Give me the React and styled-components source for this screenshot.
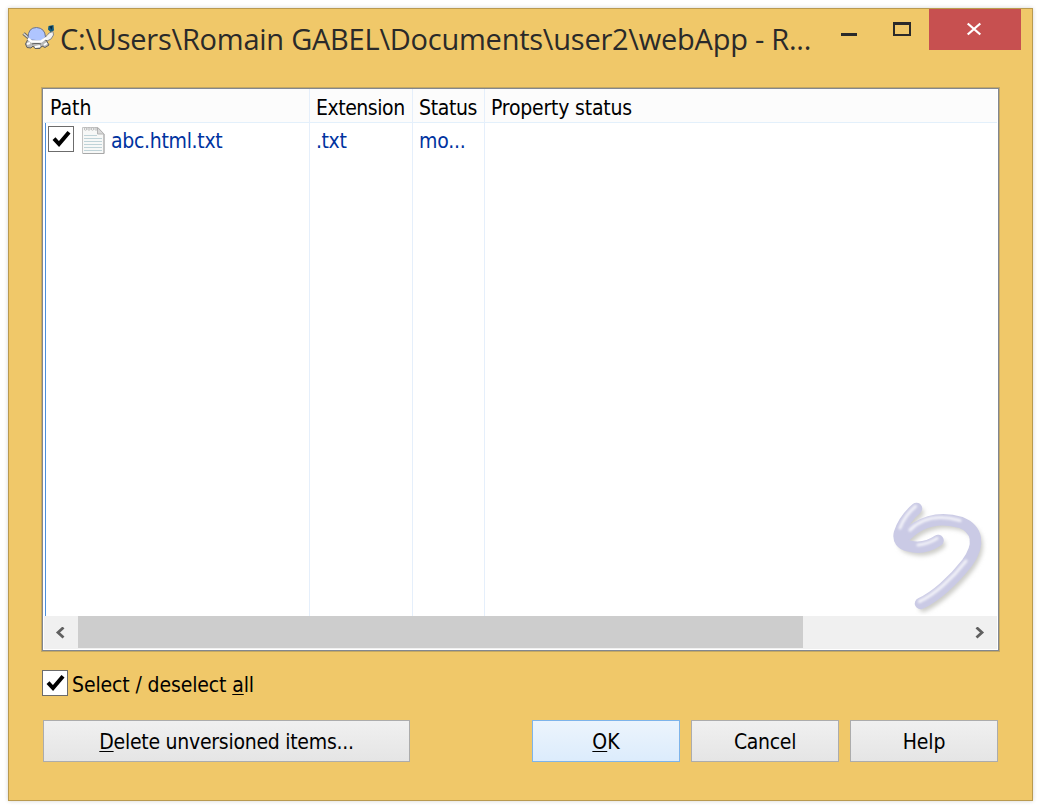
import React from "react";
import styled, { createGlobalStyle } from "styled-components";

const GlobalStyle = createGlobalStyle`
  * { box-sizing: border-box; }
  body { margin: 0; background: #fff; overflow: hidden; }
  svg { display: block; flex: none; }
`;

const Screen = styled.div`
  width: 1042px;
  height: 807px;
  padding: 8px;
  background: #fff;
  font-family: "DejaVu Sans Condensed", "DejaVu Sans", sans-serif;
  font-stretch: condensed;
  font-size: 21px;
  color: #000;
`;

const Window = styled.main`
  display: flex;
  flex-direction: column;
  width: 1025px;
  height: 793px;
  border: 1px solid #b99a50;
  background: #f0c869;
  box-shadow: 0 0 4px rgba(0, 0, 0, 0.18);
`;

const TitleBar = styled.header`
  display: flex;
  height: 79px;
  padding: 0 11px 0 13px;
`;

const TurtleIcon = styled.svg`
  margin: 14px 5px 0 0;
`;

const Title = styled.h1`
  margin: 11px 0 0;
  width: 764px;
  font: 400 29px/38px "Open Sans", "Noto Sans", sans-serif;
  letter-spacing: ${(p) => p.$spacing}px;
  white-space: nowrap;
  color: #2a2a2a;
`;

const Controls = styled.div`
  display: flex;
  margin-left: auto;
`;

const Control = styled.button`
  display: block;
  width: ${(p) => p.$width}px;
  height: 41px;
  padding: 0;
  border: 0;
  background: ${(p) => (p.$close ? "#c75050" : "transparent")};
`;

const ListView = styled.section`
  display: flex;
  flex-direction: column;
  position: relative;
  width: 957px;
  height: 563px;
  margin-left: 33px;
  padding: 0 1px 1px;
  border: 1px solid #828790;
  background: #fff;
  box-shadow: 0 0 0 1px rgba(130, 120, 90, 0.4);
`;

const Columns = styled.div`
  display: grid;
  grid-template-columns: 266px 103px 72px 1fr;
  height: 527px;
`;

const Column = styled.div`
  display: flex;
  flex-direction: column;
  border-right: ${(p) => (p.$last ? "0" : "1px solid #e5effb")};
  min-width: 0;
`;

const HeaderCell = styled.div`
  height: 34px;
  padding-left: ${(p) => p.$pad}px;
  border-bottom: 1px solid #e3f0fb;
  background: #fcfcfc;
  line-height: 39px;
  white-space: nowrap;
`;

const Cells = styled.div`
  flex: 1;
  margin-left: ${(p) => (p.$focus ? 1 : 0)}px;
  border-left: ${(p) => (p.$focus ? "1px solid #4a8fdd" : "0")};
`;

const Cell = styled.div`
  display: flex;
  align-items: center;
  height: 33px;
  padding-left: ${(p) => p.$pad}px;
  color: #0033a0;
  line-height: 33px;
  white-space: nowrap;
`;

const Label = styled.span`
  letter-spacing: ${(p) => p.$spacing || 0}px;
  position: relative;
  top: ${(p) => p.$drop || 0}px;
`;

const FileIcon = styled.svg`
  margin: 1px 6px 0 8px;
`;

const Watermark = styled.svg`
  position: absolute;
  left: 846px;
  top: 401px;
`;

const ScrollBar = styled.div`
  display: flex;
  height: 33px;
  background: #f0f0f0;
`;

const ScrollArrow = styled.div`
  display: flex;
  width: 34px;
  height: 33px;
  align-items: center;
  justify-content: center;
`;

const Track = styled.div`
  flex: 1;
`;

const Thumb = styled.div`
  width: 725px;
  height: 32px;
  background: #cdcdcd;
`;

const Box = styled.span`
  flex: none;
  width: 26px;
  height: 26px;
  margin-top: ${(p) => p.$lift || 0}px;
  border: 1px solid #6c6c6c;
  background: #fff;
`;

const SelectAll = styled.label`
  display: flex;
  align-items: center;
  gap: 4px;
  height: 26px;
  margin: 19px 0 24px 33px;
`;

const Buttons = styled.footer`
  display: flex;
  gap: 11px;
  margin: 0 34px;
`;

const PushButton = styled.button`
  width: ${(p) => p.$width || 148}px;
  height: 42px;
  padding: 1px 0 0;
  margin-right: ${(p) => p.$gap || 0}px;
  border: 1px solid ${(p) => (p.$primary ? "#7eb4ea" : "#acacac")};
  background: ${(p) =>
    p.$primary
      ? "linear-gradient(#ecf4fc, #dcecfc)"
      : "linear-gradient(#f0f0f0, #e5e5e5)"};
  font: inherit;
  color: #000;
`;

const Key = styled.span`
  text-decoration: underline;
  text-decoration-thickness: 1px;
  text-underline-offset: 2px;
`;

function CheckBox({ lift }) {
  return (
    <Box $lift={lift}>
      <svg width="24" height="24" viewBox="0 0 24 24">
        <path d="M5 11.7 10 17 20 5.2" fill="none" stroke="#000" strokeWidth="4" />
      </svg>
    </Box>
  );
}

function Turtle() {
  return (
    <TurtleIcon width="33" height="28" viewBox="0 0 33 28">
      <path d="M1.5 10.5 8 16" stroke="#66645e" strokeWidth="3.4" />
      <path d="M1.5 10.5 8 16" stroke="#ddd" strokeWidth="1.6" />
      <path d="M22 15 25 12.5 27 10 31 8.5 31.5 12 29 16 25 18Z" fill="#f3f3f3" stroke="#888" />
      <path d="M6 16 3.5 21 5 24.5 9 25 11 23 13 25.5 18 25.5 20 23 23 24.5 27 22 24 17 8 16Z" fill="#b9b9b9" stroke="#5f5f5f" />
      <path d="M5 21 8 20M13 24 18 23M22 22 25 20" stroke="#fff" strokeWidth="2" />
      <path d="M6 15Q6 4.5 14.5 4.5Q23 5 23.5 14L19 18 9 17Z" fill="#afc5ff" stroke="#6a7390" />
      <path d="M6 15.5 9.5 18.5 19 18.5 24 15" fill="none" stroke="#fff" strokeWidth="2.4" />
      <path d="M10 21 12 20.5 17 20.5 19 21" fill="none" stroke="#666" strokeWidth="1.2" />
      <path d="M26.5 3 31.5 2 32 7.5 28.5 9 26 6.5Z" fill="#135b7d" />
      <path d="M27.5 3.5 30.5 3 29.5 7Z" fill="#08273e" />
    </TurtleIcon>
  );
}

function TextFile() {
  return (
    <FileIcon width="23" height="29" viewBox="0 0 23 29">
      <path d="M.5 1.5H16L22 8V27.5H.5Z" fill="#f7f8f7" stroke="#c4c4c4" />
      <path d="M1 27.5H22V8" fill="none" stroke="#a8a8a8" />
      <path d="M15.5 1.5V8H22Z" fill="#d9d9d9" stroke="#b5b5b5" />
      <path d="M2 9.5H15M2 12.5H20M2 15.5H20M2 18.5H20M2 21.5H20M2 24.5H20" stroke="#bfd3d8" />
      <g fill="#fff" stroke="#999" strokeWidth=".6">
        <circle cx="3.5" cy="3" r="1.2" />
        <circle cx="7" cy="3" r="1.2" />
        <circle cx="10.5" cy="3" r="1.2" />
        <circle cx="14" cy="3" r="1.2" />
      </g>
    </FileIcon>
  );
}

const SHAFT = "M31.5 113.5C46 107 64 91 78 73C92 54 88 39 72 32.5C50 26 29 31 13 50";
const HEAD = "M27.5 18.5Q15 29 10.5 43Q8 53 20 56Q35 60 49 50.5";

function RevertArrow() {
  return (
    <Watermark width="105" height="125" viewBox="0 0 105 125">
      <defs>
        <filter id="soft" x="-20%" y="-20%" width="140%" height="140%">
          <feGaussianBlur stdDeviation="2" />
        </filter>
        <filter id="shine" x="-20%" y="-20%" width="140%" height="140%">
          <feGaussianBlur stdDeviation="1.1" />
        </filter>
      </defs>
      <g fill="none" strokeLinecap="round" strokeLinejoin="round">
        <g stroke="#cdcdc9" strokeWidth="9" filter="url(#soft)" transform="translate(3 4)">
          <path d={SHAFT} />
          <path d={HEAD} />
        </g>
        <g stroke="#cacae5" strokeWidth="11.5">
          <path d={SHAFT} />
          <path d={HEAD} />
        </g>
        <g stroke="#f1f1f8" strokeWidth="3.2" filter="url(#shine)" transform="translate(-1 -2)">
          <path d="M31.5 113.5C46 107 64 91 78 73M72 32.5C50 26 33 31 22 42" />
          <path d="M27.5 18.5Q17 27 12 40M30 57Q40 56 49 50.5" />
        </g>
      </g>
    </Watermark>
  );
}

export default function App() {
  return (
    <Screen>
      <GlobalStyle />
      <Window>
        <TitleBar>
          <Turtle />
          <Title $spacing={-0.24}>C:\Users\Romain GABEL\Documents\user2\webApp - R...</Title>
          <Controls>
            <Control $width={52} aria-label="Minimize">
              <svg width="52" height="41"><path d="M16 24h16v3H16z" fill="#2a2a2a" /></svg>
            </Control>
            <Control $width={52} aria-label="Maximize">
              <svg width="52" height="41"><path fillRule="evenodd" d="M16 13h18v14H16z M18 16v9h14v-9z" fill="#2a2a2a" /></svg>
            </Control>
            <Control $width={92} $close aria-label="Close">
              <svg width="92" height="41"><path d="M38.7 14.5 51.3 25.5M51.3 14.5 38.7 25.5" stroke="#fff" strokeWidth="2.3" /></svg>
            </Control>
          </Controls>
        </TitleBar>

        <ListView>
          <Columns>
            <Column>
              <HeaderCell $pad={6}><Label>Path</Label></HeaderCell>
              <Cells $focus>
                <Cell $pad={2}>
                  <CheckBox lift={-1} />
                  <TextFile />
                  <Label $drop={2} $spacing={-0.3}>abc.html.txt</Label>
                </Cell>
              </Cells>
            </Column>
            <Column>
              <HeaderCell $pad={6}><Label $spacing={-0.45}>Extension</Label></HeaderCell>
              <Cells><Cell $pad={6}><Label $drop={2} $spacing={-0.4}>.txt</Label></Cell></Cells>
            </Column>
            <Column>
              <HeaderCell $pad={6}><Label $spacing={-0.35}>Status</Label></HeaderCell>
              <Cells><Cell $pad={6}><Label $drop={2} $spacing={-0.2}>mo...</Label></Cell></Cells>
            </Column>
            <Column $last>
              <HeaderCell $pad={6}><Label $spacing={-0.2}>Property status</Label></HeaderCell>
              <Cells />
            </Column>
          </Columns>
          <RevertArrow />
          <ScrollBar>
            <ScrollArrow>
              <svg width="12" height="12" viewBox="0 0 12 12"><path d="M8.5 .5 3 5.5l5.5 5" fill="none" stroke="#606060" strokeWidth="2.8" /></svg>
            </ScrollArrow>
            <Track><Thumb /></Track>
            <ScrollArrow>
              <svg width="10" height="12" viewBox="0 0 10 12"><path d="M1.5 .5 7 5.5l-5.5 5" fill="none" stroke="#606060" strokeWidth="2.8" /></svg>
            </ScrollArrow>
          </ScrollBar>
        </ListView>

        <SelectAll>
          <CheckBox />
          <Label $drop={2} $spacing={-0.12}>Select / deselect <Key>a</Key>ll</Label>
        </SelectAll>

        <Buttons>
          <PushButton $width={367} $gap={111}><Label $spacing={-0.26}><Key>D</Key>elete unversioned items...</Label></PushButton>
          <PushButton $primary><Label><Key>O</Key>K</Label></PushButton>
          <PushButton><Label $spacing={-0.3}>Cancel</Label></PushButton>
          <PushButton><Label $spacing={-0.1}>Help</Label></PushButton>
        </Buttons>
      </Window>
    </Screen>
  );
}
